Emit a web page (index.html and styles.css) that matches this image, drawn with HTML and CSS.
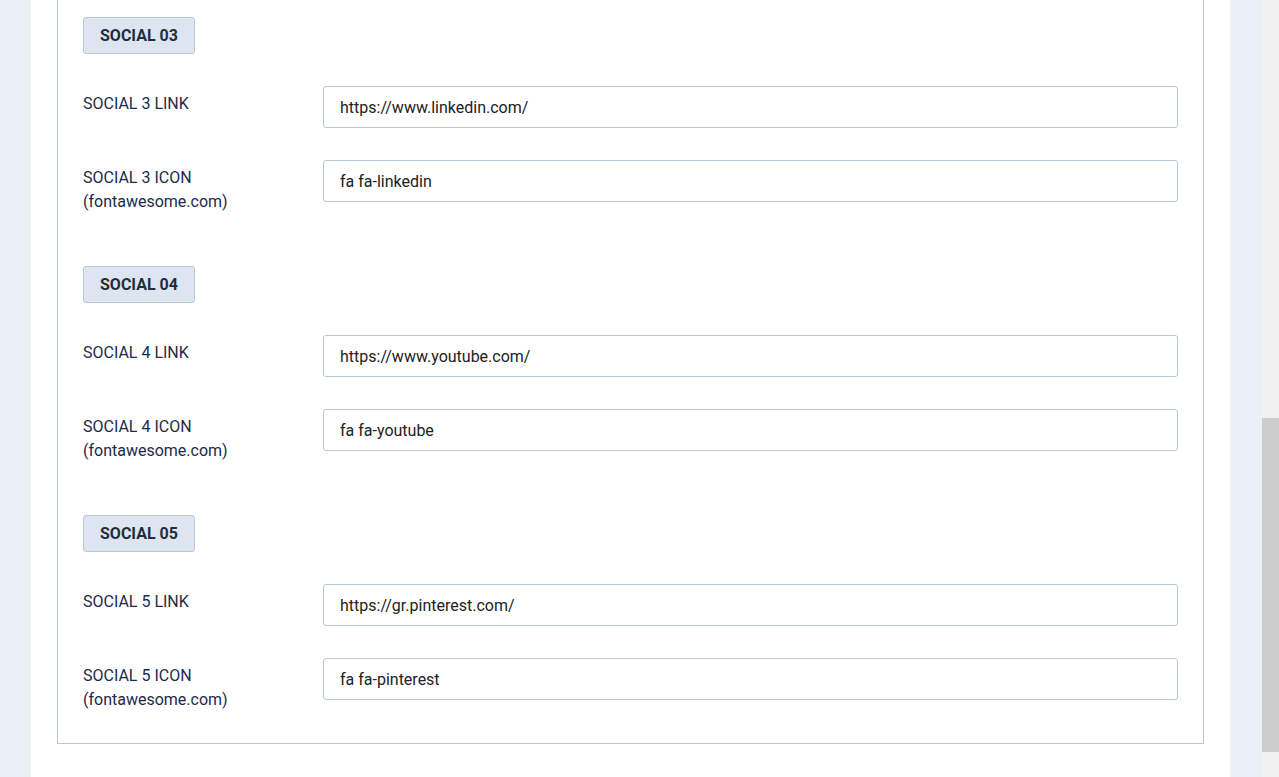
FILE: index.html
```html
<!DOCTYPE html>
<html lang="en">

<head>
    <meta charset="UTF-8">
    <title>Social Settings</title>
    <link rel="stylesheet" href="styles.css">
</head>
<body>

  <div class="page">
    <div class="main">
      <div class="panel">
        <div class="fieldset">

          <div class="section">
            <div class="badge">SOCIAL 03</div>
            <div class="row">
              <label for="s3link">SOCIAL 3 LINK</label>
              <input id="s3link" type="text" value="https://www.linkedin.com/">
            </div>
            <div class="row">
              <label for="s3icon">SOCIAL 3 ICON<br>(fontawesome.com)</label>
              <input id="s3icon" type="text" value="fa fa-linkedin">
            </div>
          </div>

          <div class="section">
            <div class="badge">SOCIAL 04</div>
            <div class="row">
              <label for="s4link">SOCIAL 4 LINK</label>
              <input id="s4link" type="text" value="https://www.youtube.com/">
            </div>
            <div class="row">
              <label for="s4icon">SOCIAL 4 ICON<br>(fontawesome.com)</label>
              <input id="s4icon" type="text" value="fa fa-youtube">
            </div>
          </div>

          <div class="section">
            <div class="badge">SOCIAL 05</div>
            <div class="row">
              <label for="s5link">SOCIAL 5 LINK</label>
              <input id="s5link" type="text" value="https://gr.pinterest.com/">
            </div>
            <div class="row">
              <label for="s5icon">SOCIAL 5 ICON<br>(fontawesome.com)</label>
              <input id="s5icon" type="text" value="fa fa-pinterest">
            </div>
          </div>

        </div>
      </div>
    </div>

    <div class="scrollbar">
      <div class="thumb"></div>
    </div>
  </div>

</body>
</html>
```

FILE: styles.css
```css
html, body {
    margin: 0;
    padding: 0;
    height: 100%;
    overflow: hidden;
}

body {
    font-family: Roboto, "Liberation Sans", Arial, sans-serif;
    background-color: #ebf0f7;
    color: #1c2b4a;
}

.page {
    display: flex;
    height: 777px;
}

.main {
    flex: 1;
    padding: 0 32px 0 31px;
}

.panel {
    background-color: #fff;
    height: 100%;
    padding: 0 26px;
}

.fieldset {
    border: 1px solid #b9c7d8;
    border-top: none;
    padding: 17px 25px 31px 25px;
}

.section {
    margin-bottom: 52px;
}

.section:last-child {
    margin-bottom: 0;
}

.badge {
    display: inline-block;
    box-sizing: border-box;
    height: 37px;
    line-height: 35px;
    padding: 0 16px;
    background-color: #dde5f0;
    border: 1px solid #b9c7d8;
    border-radius: 3px;
    font-size: 16px;
    font-weight: bold;
    color: #1f2d3d;
    margin-bottom: 32px;
}

.row {
    display: grid;
    grid-template-columns: 240px 1fr;
    margin-bottom: 32px;
}

.row:last-child {
    margin-bottom: 0;
}

.row label {
    padding-top: 6px;
    font-size: 16px;
    line-height: 24px;
    color: #1c2b4a;
}

.row input {
    box-sizing: border-box;
    height: 42px;
    width: 100%;
    padding: 0 16px;
    border: 1px solid #b9c7d8;
    border-radius: 3px;
    font-family: Roboto, "Liberation Sans", Arial, sans-serif;
    font-size: 16px;
    color: #222;
    background-color: #fff;
    outline: none;
}

.scrollbar {
    width: 17px;
    background-color: #f1f1f1;
    padding-top: 418px;
}

.thumb {
    height: 334px;
    background-color: #cdcdcd;
}
```
